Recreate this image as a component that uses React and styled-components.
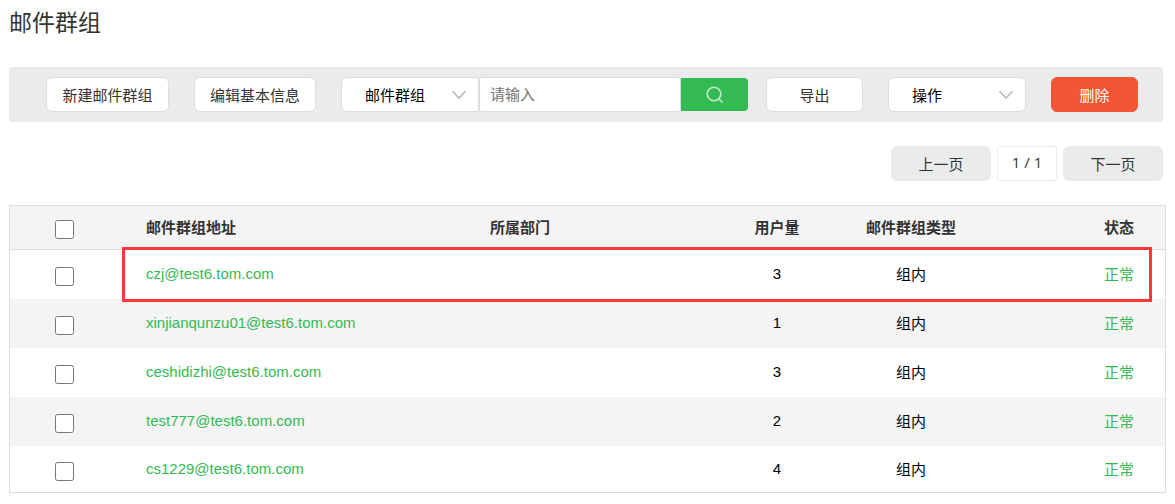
import React from "react";
import styled, { createGlobalStyle } from "styled-components";

const GlobalStyle = createGlobalStyle`
    * {
        box-sizing: border-box;
    }

    body {
        margin: 0;
        background: #fff;
        color: #000;
        font-family: "Liberation Sans", "Noto Sans CJK SC", sans-serif;
        font-size: 15px;
    }

    button, input, select {
        font: inherit;
    }
`

const groups = [
    { address: "czj@test6.tom.com", count: 3, marked: true },
    { address: "xinjianqunzu01@test6.tom.com", count: 1 },
    { address: "ceshidizhi@test6.tom.com", count: 3 },
    { address: "test777@test6.tom.com", count: 2 },
    { address: "cs1229@test6.tom.com", count: 4 },
];

function Arrow() {
    return (
        <ArrowIcon viewBox="0 0 16 10" aria-hidden="true">
            <path d="M1.5 1.2 L8 8 L14.5 1.2" />
        </ArrowIcon>
    )
}

function App() {
    return (
        <Page>
            <GlobalStyle />
            <Title>邮件群组</Title>
            <Toolbar>
                <Button $width={123}>新建邮件群组</Button>
                <Button $width={122}>编辑基本信息</Button>
                <SearchForm onSubmit={(e) => e.preventDefault()}>
                    <SelectBox>
                        <Select aria-label="搜索类型" $joined>
                            <option>邮件群组</option>
                        </Select>
                        <Arrow />
                    </SelectBox>
                    <SearchInput type="text" placeholder="请输入" aria-label="请输入" />
                    <SearchButton type="submit" aria-label="搜索">
                        <SearchIcon viewBox="0 0 18 18" aria-hidden="true">
                            <circle cx="8" cy="8" r="6.8" />
                            <path d="M12.7 12.7 L16.5 16.5" />
                        </SearchIcon>
                    </SearchButton>
                </SearchForm>
                <ToolbarEnd>
                    <Button $width={97}>导出</Button>
                    <SelectBox>
                        <Select aria-label="操作">
                            <option>操作</option>
                        </Select>
                        <Arrow />
                    </SelectBox>
                    <DeleteButton $width={87}>删除</DeleteButton>
                </ToolbarEnd>
            </Toolbar>
            <Pager>
                <PageButton>上一页</PageButton>
                <PageNumber>1 / 1</PageNumber>
                <PageButton>下一页</PageButton>
            </Pager>
            <Table>
                <colgroup>
                    <Col $width={109} />
                    <Col $width={344} />
                    <col />
                    <Col $width={132} />
                    <Col $width={136} />
                    <Col $width={186} />
                </colgroup>
                <thead>
                    <tr>
                        <CheckHead><Checkbox type="checkbox" aria-label="全选" /></CheckHead>
                        <Th $align="left">邮件群组地址</Th>
                        <Th $align="left">所属部门</Th>
                        <Th>用户量</Th>
                        <Th>邮件群组类型</Th>
                        <Th $align="right">状态</Th>
                    </tr>
                </thead>
                <tbody>
                    {groups.map((group) => (
                        <Row key={group.address}>
                            <CheckCell>
                                <Checkbox type="checkbox" aria-label={group.address} />
                                {group.marked && <Marker />}
                            </CheckCell>
                            <Td $align="left"><Address href="#">{group.address}</Address></Td>
                            <Td $align="left"></Td>
                            <Td>{group.count}</Td>
                            <Td>组内</Td>
                            <StatusCell $align="right">正常</StatusCell>
                        </Row>
                    ))}
                </tbody>
            </Table>
        </Page>
    )
}

const Page = styled.main`
    padding: 6px 9px 11px;
`

const Title = styled.h1`
    margin: 0;
    font-size: 23px;
    font-weight: normal;
    line-height: 34px;
    color: #333;
`

const Toolbar = styled.div`
    display: flex;
    align-items: center;
    gap: 25px;
    height: 55px;
    margin: 27px 3px 0 0;
    padding: 0 25px 0 37px;
    border-radius: 2px;
    background: #eaeceb;
`

const Button = styled.button`
    flex: none;
    width: ${(props) => props.$width}px;
    height: 35px;
    padding: 0;
    border: 1px solid #ddd;
    border-radius: 6px;
    background: #fff;
    color: #333;
    white-space: nowrap;
`

const DeleteButton = styled(Button)`
    border-color: #f35535;
    background: #f35535;
    color: #fff;
`

const ToolbarEnd = styled.div`
    display: flex;
    gap: 25px;
    margin-left: -7px;
`

const SearchForm = styled.form`
    display: flex;
    align-items: center;
    flex: 1;
    min-width: 0;
`

const SelectBox = styled.div`
    position: relative;
    flex: none;
    width: 138px;
`

const Select = styled.select`
    display: block;
    appearance: none;
    width: 100%;
    height: 35px;
    padding: 2px 36px 0 23px;
    border: 1px solid #ddd;
    border-radius: ${(props) => (props.$joined ? "6px 2px 2px 6px" : "6px")};
    background: #fff;
    color: #000;
`

const ArrowIcon = styled.svg`
    position: absolute;
    top: 13px;
    right: 12px;
    width: 16px;
    height: 10px;
    fill: none;
    stroke: #b8b8b8;
    stroke-width: 1.6;
    pointer-events: none;
`

const SearchInput = styled.input`
    flex: 1;
    min-width: 0;
    height: 35px;
    padding: 0 10px;
    border: 1px solid #ddd;
    border-radius: 2px;
    background: #fff;

    &::placeholder {
        color: #757575;
    }
`

const SearchButton = styled.button`
    display: flex;
    align-items: center;
    justify-content: center;
    flex: none;
    width: 67px;
    height: 33px;
    padding: 0;
    border: 0;
    border-radius: 0 4px 4px 0;
    background: #33ba53;
`

const SearchIcon = styled.svg`
    width: 18px;
    height: 18px;
    fill: none;
    stroke: #c4ebcd;
    stroke-width: 1.6;
`

const Pager = styled.nav`
    display: flex;
    justify-content: flex-end;
    gap: 6px;
    margin: 24px 3px 24px 0;
`

const PageButton = styled.button`
    width: 100px;
    height: 35px;
    padding: 0;
    border: 0;
    border-radius: 6px;
    background: #eaeceb;
    color: #333;
`

const PageNumber = styled.span`
    width: 60px;
    height: 35px;
    border: 1px solid #eaeceb;
    border-radius: 2px;
    font-family: "Open Sans", sans-serif;
    line-height: 30px;
    text-align: center;
    color: #333;
`

const Table = styled.table`
    width: 100%;
    table-layout: fixed;
    border: 1px solid #ddd;
    border-spacing: 0;
`

const Col = styled.col`
    width: ${(props) => props.$width}px;
`

const Td = styled.td`
    padding: 0 ${(props) => (props.$align === "right" ? 31 : 0)}px 2px ${(props) => (props.$align === "left" ? 27 : 0)}px;
    text-align: ${(props) => props.$align || "center"};
    white-space: nowrap;
`

const Th = styled(Td).attrs({ as: "th" })`
    height: 44px;
    border-bottom: 1px solid #ddd;
    background: #f4f4f4;
    color: #333;
`

const StatusCell = styled(Td)`
    color: #33ba53;
`

const CheckCell = styled(Td)`
    padding: 4px 0 0;
`

const CheckHead = styled(Th)`
    padding: 4px 0 0;
`

const Row = styled.tr`
    position: relative;
    height: 49px;

    &:nth-child(even) {
        background: #f4f4f4;
    }

    &:last-child {
        height: 46px;
    }
`

const Checkbox = styled.input`
    display: block;
    width: 19px;
    height: 19px;
    margin: 0 auto;
`

const Address = styled.a`
    color: #33ba53;
    text-decoration: none;
`

// red frame laid over the marked row
const Marker = styled.span`
    position: absolute;
    top: -3px;
    right: 13px;
    bottom: -3px;
    left: 112px;
    z-index: 1;
    border: 3px solid #fd3838;
    pointer-events: none;
`

export default App
